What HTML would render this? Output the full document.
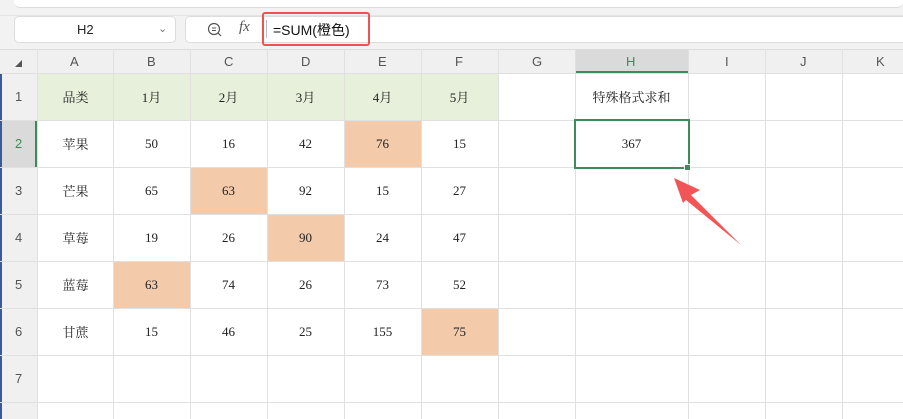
<!DOCTYPE html>
<html><head><meta charset="utf-8"><style>
*{margin:0;padding:0;box-sizing:border-box}
body{width:903px;height:419px;overflow:hidden;background:#fff;position:relative;font-family:"Liberation Sans","Noto Sans CJK SC",sans-serif}
.a{position:absolute}
.c{position:absolute;display:flex;align-items:center;justify-content:center;font-family:"Liberation Serif","Noto Serif CJK SC",serif;font-size:13px;color:#222}
</style></head><body>
<div class="a" style="left:0;top:0;width:903px;height:49px;background:#f2f2f2"></div>
<div class="a" style="left:14px;top:0;width:889px;height:8px;background:#fff;border-bottom:1px solid #ddd;border-radius:0 0 6px 6px"></div>
<div class="a" style="left:0;top:15px;width:903px;height:1px;background:#e4e4e4"></div>
<div class="a" style="left:14px;top:16px;width:162px;height:27px;background:#fff;border:1px solid #ddd;border-radius:5px"></div>
<div class="a" style="left:77px;top:22px;font-size:13px;color:#222">H2</div>
<div class="a" style="left:158px;top:22px;font-size:11px;color:#777">&#8964;</div>
<div class="a" style="left:185px;top:16px;width:730px;height:27px;background:#fff;border:1px solid #ddd;border-radius:5px"></div>
<svg class="a" style="left:207px;top:22px" width="16" height="16"><circle cx="7" cy="7" r="5.5" fill="none" stroke="#555" stroke-width="1.2"/><line x1="5" y1="6" x2="9" y2="6" stroke="#555"/><line x1="5" y1="8.5" x2="9" y2="8.5" stroke="#555"/><line x1="11" y1="11" x2="14" y2="14" stroke="#555" stroke-width="1.2"/></svg>
<div class="a" style="left:239px;top:19px;font-family:'Liberation Serif',serif;font-style:italic;font-size:15px;color:#555">fx</div>
<div class="a" style="left:262px;top:12px;width:108px;height:34px;border:2.5px solid #ef5350;border-radius:3px"></div>
<div class="a" style="left:266px;top:20px;width:1px;height:18px;background:#bbb"></div>
<div class="a" style="left:273px;top:20px;font-size:14px;color:#111">=SUM(橙色)</div>
<div class="a" style="left:0;top:49px;width:903px;height:24px;background:#f0f0f0;border-top:1px solid #ddd"></div>
<div class="a" style="left:15px;top:60px;width:0;height:0;border-left:7px solid transparent;border-bottom:7px solid #555"></div>
<div class="a" style="left:0;top:73px;width:37px;height:346px;background:#f0f0f0;border-left:2px solid #3a5a9a"></div>
<div class="a" style="left:575px;top:49px;width:113px;height:24px;background:#dadada;border-bottom:2px solid #3f8a5a"></div>
<div class="a" style="left:2px;top:120px;width:35px;height:47px;background:#dadada;border-right:2px solid #3f8a5a"></div>
<div class="a" style="left:37px;top:73px;width:461px;height:47px;background:#e6f0da"></div>
<div class="a" style="left:344px;top:120px;width:77px;height:47px;background:#f3cbaa"></div>
<div class="a" style="left:190px;top:167px;width:77px;height:47px;background:#f3cbaa"></div>
<div class="a" style="left:267px;top:214px;width:77px;height:47px;background:#f3cbaa"></div>
<div class="a" style="left:113px;top:261px;width:77px;height:47px;background:#f3cbaa"></div>
<div class="a" style="left:421px;top:308px;width:77px;height:47px;background:#f3cbaa"></div>
<svg class="a" style="left:0;top:49px" width="903" height="370">
<g stroke="#e0e0e0" stroke-width="1" shape-rendering="crispEdges">
<line x1="37.5" y1="0" x2="37.5" y2="370"/><line x1="113.5" y1="0" x2="113.5" y2="370"/><line x1="190.5" y1="0" x2="190.5" y2="370"/><line x1="267.5" y1="0" x2="267.5" y2="370"/><line x1="344.5" y1="0" x2="344.5" y2="370"/><line x1="421.5" y1="0" x2="421.5" y2="370"/><line x1="498.5" y1="0" x2="498.5" y2="370"/><line x1="575.5" y1="0" x2="575.5" y2="370"/><line x1="688.5" y1="0" x2="688.5" y2="370"/><line x1="765.5" y1="0" x2="765.5" y2="370"/><line x1="842.5" y1="0" x2="842.5" y2="370"/>
<line x1="0" y1="24.5" x2="903" y2="24.5"/><line x1="0" y1="71.5" x2="903" y2="71.5"/><line x1="0" y1="118.5" x2="903" y2="118.5"/><line x1="0" y1="165.5" x2="903" y2="165.5"/><line x1="0" y1="212.5" x2="903" y2="212.5"/><line x1="0" y1="259.5" x2="903" y2="259.5"/><line x1="0" y1="306.5" x2="903" y2="306.5"/><line x1="0" y1="353.5" x2="903" y2="353.5"/>
</g></svg>
<div class="a" style="left:0;top:49px;width:903px;height:24px;font-size:13px;color:#555">
<span class="a" style="left:70px;top:5px">A</span><span class="a" style="left:147px;top:5px">B</span><span class="a" style="left:224px;top:5px">C</span><span class="a" style="left:301px;top:5px">D</span><span class="a" style="left:378px;top:5px">E</span><span class="a" style="left:455px;top:5px">F</span><span class="a" style="left:532px;top:5px">G</span><span class="a" style="left:626px;top:5px;color:#3f8a5a">H</span><span class="a" style="left:725px;top:5px">I</span><span class="a" style="left:800px;top:5px">J</span><span class="a" style="left:876px;top:5px">K</span>
</div>
<div class="a" style="left:0;top:73px;width:37px;font-size:13px;color:#555">
<span class="a" style="left:15px;top:16px">1</span><span class="a" style="left:15px;top:63px;color:#3f8a5a">2</span><span class="a" style="left:15px;top:110px">3</span><span class="a" style="left:15px;top:157px">4</span><span class="a" style="left:15px;top:204px">5</span><span class="a" style="left:15px;top:251px">6</span><span class="a" style="left:15px;top:298px">7</span>
</div>
<div class="c" style="left:37px;top:73px;width:77px;height:47px">品类</div><div class="c" style="left:113px;top:73px;width:77px;height:47px">1月</div><div class="c" style="left:190px;top:73px;width:77px;height:47px">2月</div><div class="c" style="left:267px;top:73px;width:77px;height:47px">3月</div><div class="c" style="left:344px;top:73px;width:77px;height:47px">4月</div><div class="c" style="left:421px;top:73px;width:77px;height:47px">5月</div><div class="c" style="left:575px;top:73px;width:113px;height:47px">特殊格式求和</div>
<div class="c" style="left:37px;top:120px;width:77px;height:47px">苹果</div><div class="c" style="left:113px;top:120px;width:77px;height:47px">50</div><div class="c" style="left:190px;top:120px;width:77px;height:47px">16</div><div class="c" style="left:267px;top:120px;width:77px;height:47px">42</div><div class="c" style="left:344px;top:120px;width:77px;height:47px">76</div><div class="c" style="left:421px;top:120px;width:77px;height:47px">15</div><div class="c" style="left:575px;top:120px;width:113px;height:47px">367</div>
<div class="c" style="left:37px;top:167px;width:77px;height:47px">芒果</div><div class="c" style="left:113px;top:167px;width:77px;height:47px">65</div><div class="c" style="left:190px;top:167px;width:77px;height:47px">63</div><div class="c" style="left:267px;top:167px;width:77px;height:47px">92</div><div class="c" style="left:344px;top:167px;width:77px;height:47px">15</div><div class="c" style="left:421px;top:167px;width:77px;height:47px">27</div>
<div class="c" style="left:37px;top:214px;width:77px;height:47px">草莓</div><div class="c" style="left:113px;top:214px;width:77px;height:47px">19</div><div class="c" style="left:190px;top:214px;width:77px;height:47px">26</div><div class="c" style="left:267px;top:214px;width:77px;height:47px">90</div><div class="c" style="left:344px;top:214px;width:77px;height:47px">24</div><div class="c" style="left:421px;top:214px;width:77px;height:47px">47</div>
<div class="c" style="left:37px;top:261px;width:77px;height:47px">蓝莓</div><div class="c" style="left:113px;top:261px;width:77px;height:47px">63</div><div class="c" style="left:190px;top:261px;width:77px;height:47px">74</div><div class="c" style="left:267px;top:261px;width:77px;height:47px">26</div><div class="c" style="left:344px;top:261px;width:77px;height:47px">73</div><div class="c" style="left:421px;top:261px;width:77px;height:47px">52</div>
<div class="c" style="left:37px;top:308px;width:77px;height:47px">甘蔗</div><div class="c" style="left:113px;top:308px;width:77px;height:47px">15</div><div class="c" style="left:190px;top:308px;width:77px;height:47px">46</div><div class="c" style="left:267px;top:308px;width:77px;height:47px">25</div><div class="c" style="left:344px;top:308px;width:77px;height:47px">155</div><div class="c" style="left:421px;top:308px;width:77px;height:47px">75</div>
<div class="a" style="left:574px;top:119px;width:116px;height:50px;border:2px solid #3f8a5a"></div>
<div class="a" style="left:684px;top:164px;width:7px;height:7px;background:#3f8a5a;border:1px solid #fff"></div>
<svg class="a" style="left:0;top:0" width="903" height="419"><polygon points="674,178 700,190 691,195 741,245 686,200 683,203" fill="#f25555"/></svg>
</body></html>
